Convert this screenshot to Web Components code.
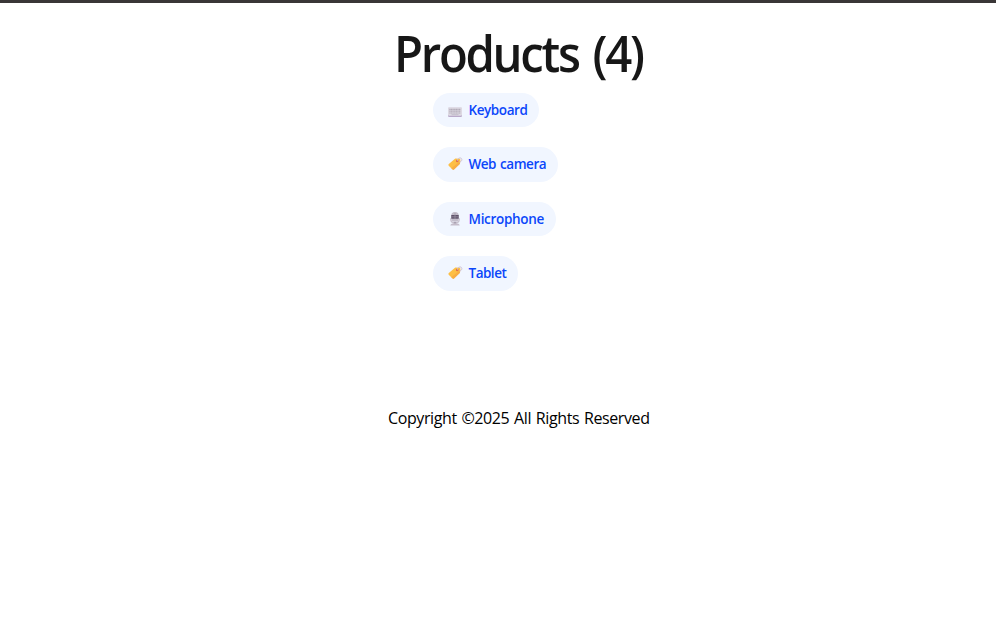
<!DOCTYPE html>
<html lang="en"><head><meta charset="utf-8"><title>Products</title>
<style>html,body{margin:0;background:#fff;font-family:"Open Sans","Noto Sans",sans-serif}</style></head>
<body><products-page></products-page>
<script>
const icons = {
keyboard:`<rect x="0" y="4.8" width="14" height="9.2" rx="1.2" fill="#b9a9c9"/><rect x="0" y="4.3" width="14" height="8.4" rx="1" fill="#dedae3"/><path d="M1.3 6.3h11.4M1.3 8.2h11.4M1.3 10h11.4" stroke="#b2abb8" stroke-width="1.2" stroke-dasharray="1.3 .3"/><path d="M3.5 11.7h7" stroke="#bdb5c4" stroke-width=".8"/>`,
tag:`<path d="M7.3 1.4 11.5 1.7Q12.6 2 12.4 3.4L12 6.8 6 12.4Q5.2 13.1 4.3 12.3L.7 8.7Q0 7.8.8 7Z" fill="#fdbf45"/><path d="M12 6.8 6 12.4Q5.2 13.1 4.3 12.3L3.3 11.3 11.9 4.2Z" fill="#f8ad43"/><circle cx="9.2" cy="4" r="1.3" fill="#df704e"/><path d="M9.4 3.8C9.2 .6 13.8-.1 13.8 2.5 13.8 4.2 12.6 4.9 11.4 5" fill="none" stroke="#c9bbd1" stroke-width=".9"/>`,
mic:`<path d="M2.8 6.3v1.3Q3.2 11 7 11t4.2-3.4V6.3" fill="none" stroke="#c9c2cf" stroke-width="1.4"/><path d="M5.8 10h2.4v2H5.8z" fill="#a9a1b1"/><path d="M2.3 13.5Q2.7 11.3 7 11.2t4.7 2.3Z" fill="#c5bdcb"/><rect x="3.3" y="0" width="7.4" height="9.8" rx="3.5" fill="#c3bdca"/><path d="M3.3 3h7.4v3.7H3.3z" fill="#5e5269"/><path d="M3.3 4.8h7.4M7 1v6" stroke="#9e95a8" stroke-width=".7"/>`
};
class ProductChip extends HTMLElement{connectedCallback(){
 this.attachShadow({mode:"open"}).innerHTML=`<style>
 :host{display:flex;box-sizing:border-box;align-items:center;width:var(--chip);height:34.4px;padding-left:15px;padding-bottom:var(--lift,0);border-radius:18px;background:#f1f6ff;color:#0b46fa;font-weight:600;font-size:13.5px;line-height:20px;white-space:nowrap}
 svg{flex:none;width:14px;height:14px;margin-right:6.5px;overflow:visible}
 span{letter-spacing:var(--track);word-spacing:1px}</style>
 <svg viewBox="0 0 14 14">${icons[this.getAttribute("icon")]}</svg><span><slot></slot></span>`;}}
class PageTitle extends HTMLElement{connectedCallback(){
 this.attachShadow({mode:"open"}).innerHTML=`<style>
 :host{display:block;height:68px}
 h1{margin:0;font-weight:600;font-size:50px;line-height:56px;letter-spacing:-2.4px;word-spacing:4px;color:#171717;white-space:nowrap;transform:scaleX(.945);transform-origin:0 0}</style><h1><slot></slot></h1>`;}}
class PageFooter extends HTMLElement{connectedCallback(){
 this.attachShadow({mode:"open"}).innerHTML=`<style>
 :host{display:block;margin-top:115px}
 p{margin:0;font-size:16px;line-height:24px;letter-spacing:-.4px;word-spacing:1px;color:#000;white-space:nowrap}</style><p><slot></slot></p>`;}}
class ProductsPage extends HTMLElement{connectedCallback(){
 this.attachShadow({mode:"open"}).innerHTML=`<style>
 :host{display:block;height:622px;box-sizing:border-box;border-top:3px solid #393637}
 main{width:262px;margin-left:388px;padding-top:22px}
 page-title{padding-left:5.5px}
 section{display:grid;gap:20px;padding-left:45px}</style>
 <main><page-title>Products (4)</page-title><section>
 <product-chip icon="keyboard" style="--chip:106px;--track:-.42px">Keyboard</product-chip>
 <product-chip icon="tag" style="--chip:125px;--track:-.47px;--lift:1px">Web camera</product-chip>
 <product-chip icon="mic" style="--chip:123px;--track:-.3px">Microphone</product-chip>
 <product-chip icon="tag" style="--chip:85px;--track:-.5px">Tablet</product-chip>
 </section><page-footer>Copyright ©2025 All Rights Reserved</page-footer></main>`;}}
customElements.define("product-chip",ProductChip);
customElements.define("page-title",PageTitle);
customElements.define("page-footer",PageFooter);
customElements.define("products-page",ProductsPage);
</script></body></html>
